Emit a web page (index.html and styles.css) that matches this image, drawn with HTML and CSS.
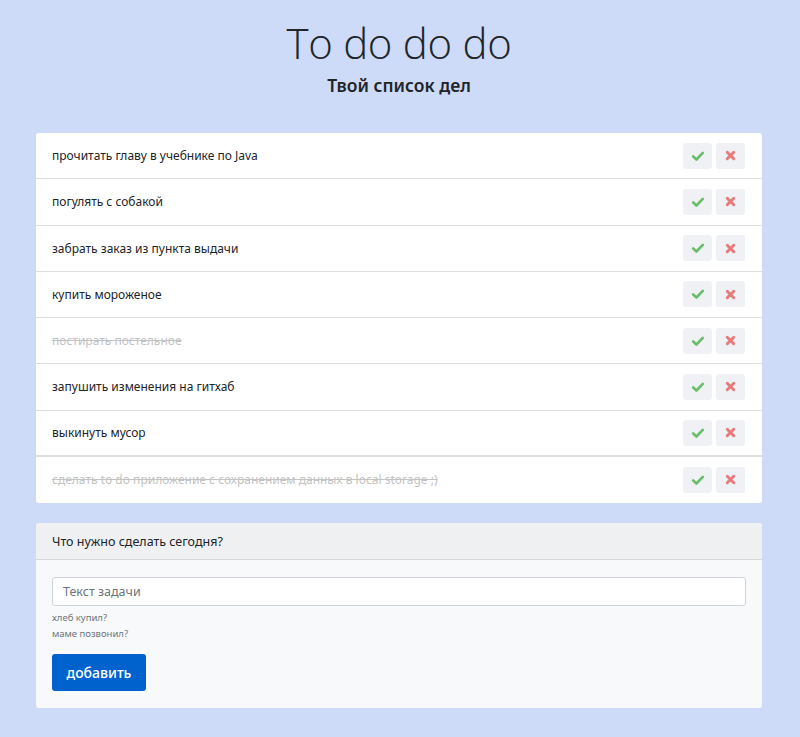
FILE: index.html
```html
<!DOCTYPE html>
<html lang="ru">
<head>
<meta charset="utf-8">
<title>To do do do</title>
<link rel="stylesheet" href="styles.css">
</head>
<body>
<div class="page">
  <header class="head">
    <h1 class="title">To do do do</h1>
    <h2 class="subtitle">Твой список дел</h2>
  </header>

  <ul class="list">
    <li class="item"><span class="text">прочитать главу в учебнике по Java</span><span class="actions"><button class="act ok"><svg viewBox="0 0 16 16"><path d="M2.5 8.5 L6.2 12 L13.5 4.5"/></svg></button><button class="act del"><svg viewBox="0 0 16 16"><path d="M4 4 L12 12 M12 4 L4 12"/></svg></button></span></li>
    <li class="item"><span class="text">погулять с собакой</span><span class="actions"><button class="act ok"><svg viewBox="0 0 16 16"><path d="M2.5 8.5 L6.2 12 L13.5 4.5"/></svg></button><button class="act del"><svg viewBox="0 0 16 16"><path d="M4 4 L12 12 M12 4 L4 12"/></svg></button></span></li>
    <li class="item"><span class="text">забрать заказ из пункта выдачи</span><span class="actions"><button class="act ok"><svg viewBox="0 0 16 16"><path d="M2.5 8.5 L6.2 12 L13.5 4.5"/></svg></button><button class="act del"><svg viewBox="0 0 16 16"><path d="M4 4 L12 12 M12 4 L4 12"/></svg></button></span></li>
    <li class="item"><span class="text">купить мороженое</span><span class="actions"><button class="act ok"><svg viewBox="0 0 16 16"><path d="M2.5 8.5 L6.2 12 L13.5 4.5"/></svg></button><button class="act del"><svg viewBox="0 0 16 16"><path d="M4 4 L12 12 M12 4 L4 12"/></svg></button></span></li>
    <li class="item done"><span class="text">постирать постельное</span><span class="actions"><button class="act ok"><svg viewBox="0 0 16 16"><path d="M2.5 8.5 L6.2 12 L13.5 4.5"/></svg></button><button class="act del"><svg viewBox="0 0 16 16"><path d="M4 4 L12 12 M12 4 L4 12"/></svg></button></span></li>
    <li class="item"><span class="text">запушить изменения на гитхаб</span><span class="actions"><button class="act ok"><svg viewBox="0 0 16 16"><path d="M2.5 8.5 L6.2 12 L13.5 4.5"/></svg></button><button class="act del"><svg viewBox="0 0 16 16"><path d="M4 4 L12 12 M12 4 L4 12"/></svg></button></span></li>
    <li class="item thick"><span class="text">выкинуть мусор</span><span class="actions"><button class="act ok"><svg viewBox="0 0 16 16"><path d="M2.5 8.5 L6.2 12 L13.5 4.5"/></svg></button><button class="act del"><svg viewBox="0 0 16 16"><path d="M4 4 L12 12 M12 4 L4 12"/></svg></button></span></li>
    <li class="item done"><span class="text">сделать to do приложение с сохранением данных в local storage ;)</span><span class="actions"><button class="act ok"><svg viewBox="0 0 16 16"><path d="M2.5 8.5 L6.2 12 L13.5 4.5"/></svg></button><button class="act del"><svg viewBox="0 0 16 16"><path d="M4 4 L12 12 M12 4 L4 12"/></svg></button></span></li>
  </ul>

  <section class="card">
    <div class="card-head">Что нужно сделать сегодня?</div>
    <div class="card-body">
      <input class="field" type="text" placeholder="Текст задачи">
      <div class="hints">
        <div class="hint">хлеб купил?</div>
        <div class="hint">маме позвонил?</div>
      </div>
      <button class="add">добавить</button>
    </div>
  </section>
</div>
</body>
</html>
```

FILE: styles.css
```css
* { box-sizing: border-box; }

html, body {
  margin: 0;
  padding: 0;
}

body {
  background: #cddbf9;
  font-family: "Noto Sans", "Open Sans", "Liberation Sans", sans-serif;
  color: #212529;
}

.page {
  width: 726px;
  margin: 0 0 0 36px;
  padding-top: 14px;
  padding-bottom: 30px;
}

.head {
  text-align: center;
}

.title {
  margin: 0;
  font-family: "Open Sans", "Noto Sans", sans-serif;
  font-weight: 300;
  font-size: 42px;
  line-height: 58px;
  letter-spacing: -0.3px;
  color: #212529;
}

.subtitle {
  margin: 0;
  font-size: 17.5px;
  font-weight: 600;
  line-height: 26px;
  color: #212529;
}

.list {
  list-style: none;
  margin: 35px 0 0;
  padding: 0;
  background: #fff;
  border-radius: 3px;
  overflow: hidden;
}

.item {
  display: flex;
  align-items: center;
  justify-content: space-between;
  height: 46.25px;
  padding: 0 17px 0 16px;
  border-bottom: 1px solid #dedede;
  font-size: 12px;
}

.item:last-child {
  border-bottom: none;
}

.item.thick {
  border-bottom: 2px solid #dedede;
}

.item.done .text {
  color: #c3c3c3;
  text-decoration: line-through;
}

.actions {
  display: flex;
  gap: 4px;
}

.act {
  width: 29px;
  height: 26px;
  padding: 0;
  border: none;
  border-radius: 3px;
  background: #eff1f4;
  display: flex;
  align-items: center;
  justify-content: center;
}

.act svg {
  width: 14px;
  height: 14px;
  fill: none;
  stroke-width: 3;
  stroke-linecap: round;
  stroke-linejoin: round;
}

.act.ok svg { stroke: #69be6c; }
.act.del svg { stroke: #e67b7b; width: 13px; height: 13px; stroke-width: 3.6; }

.card {
  margin-top: 20px;
  background: #f8f9fa;
  border-radius: 3px;
  overflow: hidden;
}

.card-head {
  height: 37px;
  display: flex;
  align-items: center;
  padding: 0 16px;
  background: #eff0f2;
  border-bottom: 1px solid #d6d8db;
  font-size: 12.5px;
}

.card-body {
  padding: 17px 16px 17px;
}

.field {
  display: block;
  width: 100%;
  height: 29px;
  padding: 0 10px;
  border: 1px solid #cfd3d7;
  border-radius: 3px;
  background: #fff;
  font-family: inherit;
  font-size: 12.5px;
  color: #495057;
}

.field::placeholder {
  color: #6c757d;
}

.hints {
  margin-top: 4px;
}

.hint {
  font-size: 9.5px;
  line-height: 16px;
  color: #6c757d;
}

.add {
  margin-top: 12px;
  width: 94px;
  height: 37px;
  border: none;
  border-radius: 3px;
  background: #0062cc;
  color: #fff;
  font-family: inherit;
  font-size: 14px;
  font-weight: 500;
  padding: 0;
}
```
